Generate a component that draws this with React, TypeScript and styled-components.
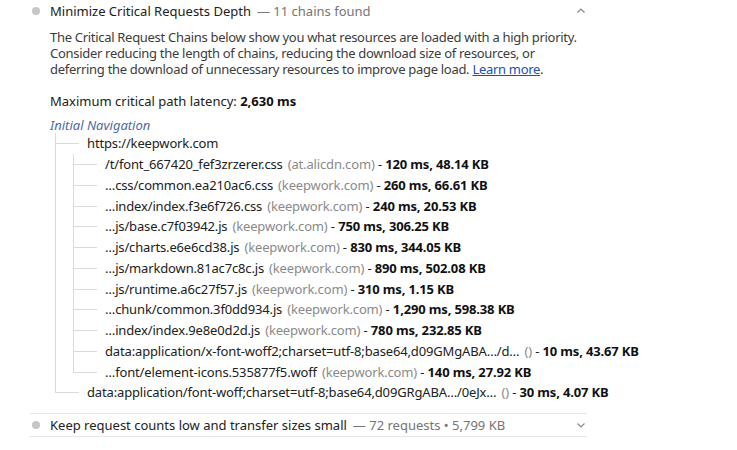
import React from "react";
import styled, { createGlobalStyle } from "styled-components";

const Global = createGlobalStyle`
  html, body { margin: 0; padding: 0; background: #fff; }
  body { font-family: "Noto Sans", "Open Sans", sans-serif; color: #212121; }
`;

const Page = styled.div`
  padding-left: 30px;
  width: 557px;
`;

const Audit = styled.section<{ $bordered?: boolean }>`
  border-top: ${(p) => (p.$bordered ? "1px solid #e6e6e6" : "none")};
  border-bottom: ${(p) => (p.$bordered ? "1px solid #e6e6e6" : "none")};
`;

const Header = styled.div`
  display: flex;
  align-items: center;
  height: 22px;
  padding-left: 2px;
  font-size: 13px;
`;

const Bullet = styled.span`
  width: 8px;
  height: 8px;
  border-radius: 50%;
  background: #c6c6c6;
  margin-right: 10px;
  flex: none;
`;

const Title = styled.span`
  flex: 1;
  white-space: nowrap;
`;

const Display = styled.span`
  color: #757575;
  margin-left: 6px;
`;

const Chevron = styled.svg`
  width: 10px;
  height: 10px;
  margin-right: 1px;
  flex: none;
`;

const Body = styled.div`
  padding-left: 20px;
  padding-top: 7px;
  padding-bottom: 10px;
  font-size: 13px;
`;

const Description = styled.p`
  margin: 0;
  color: #3c3c3c;
  white-space: nowrap;
  letter-spacing: -0.3px;
`;

const DescLine = styled.span`
  display: block;
  height: 16px;
  line-height: 16px;
`;

const Link = styled.a`
  color: #1a4fb5;
  text-decoration: underline;
`;

const Latency = styled.div`
  margin-top: 16px;
  line-height: 16px;
`;

const Strong = styled.b`
  font-weight: 700;
  color: #111;
`;

const NavLabel = styled.div`
  margin-top: 8px;
  line-height: 16px;
  font-style: italic;
  color: #4a6ca4;
`;

const Tree = styled.div`
  letter-spacing: -0.15px;
`;

const Row = styled.div`
  display: flex;
  align-items: stretch;
  height: 20.75px;
  white-space: nowrap;
`;

const Vert = styled.span<{ $on: boolean }>`
  width: 18px;
  flex: none;
  position: relative;
  &::before {
    content: "";
    display: ${(p) => (p.$on ? "block" : "none")};
    position: absolute;
    left: 5px;
    top: 0;
    bottom: 0;
    border-left: 1px solid #dadada;
  }
`;

const Connector = styled.span<{ $last: boolean }>`
  width: 32px;
  flex: none;
  position: relative;
  &::before {
    content: "";
    position: absolute;
    left: 5px;
    top: 0;
    height: ${(p) => (p.$last ? "50%" : "100%")};
    border-left: 1px solid #dadada;
  }
  &::after {
    content: "";
    position: absolute;
    left: 5px;
    width: 24px;
    top: 50%;
    border-top: 1px solid #dadada;
  }
`;

const Label = styled.span`
  display: flex;
  align-items: center;
  padding-left: 5px;
  color: #212121;
`;

const Domain = styled.span`
  color: #8a8a8a;
  margin-left: 5px;
`;

type Node = {
  url: string;
  domain?: string;
  time?: string;
  last: boolean;
  parentsOn: boolean[];
};

const children: [string, string, string][] = [
  ["/t/font_667420_fef3zrzerer.css", "(at.alicdn.com)", "120 ms, 48.14 KB"],
  ["…css/common.ea210ac6.css", "(keepwork.com)", "260 ms, 66.61 KB"],
  ["…index/index.f3e6f726.css", "(keepwork.com)", "240 ms, 20.53 KB"],
  ["…js/base.c7f03942.js", "(keepwork.com)", "750 ms, 306.25 KB"],
  ["…js/charts.e6e6cd38.js", "(keepwork.com)", "830 ms, 344.05 KB"],
  ["…js/markdown.81ac7c8c.js", "(keepwork.com)", "890 ms, 502.08 KB"],
  ["…js/runtime.a6c27f57.js", "(keepwork.com)", "310 ms, 1.15 KB"],
  ["…chunk/common.3f0dd934.js", "(keepwork.com)", "1,290 ms, 598.38 KB"],
  ["…index/index.9e8e0d2d.js", "(keepwork.com)", "780 ms, 232.85 KB"],
  ["data:application/x-font-woff2;charset=utf-8;base64,d09GMgABA…/d…", "()", "10 ms, 43.67 KB"],
  ["…font/element-icons.535877f5.woff", "(keepwork.com)", "140 ms, 27.92 KB"],
];

const nodes: Node[] = [
  { url: "https://keepwork.com", last: false, parentsOn: [] },
  ...children.map(([url, domain, time], i) => ({
    url,
    domain,
    time,
    last: i === children.length - 1,
    parentsOn: [true],
  })),
  {
    url: "data:application/font-woff;charset=utf-8;base64,d09GRgABA…/0eJx…",
    domain: "()",
    time: "30 ms, 4.07 KB",
    last: true,
    parentsOn: [],
  },
];

const Up = () => (
  <Chevron viewBox="0 0 10 10">
    <path d="M1.5 6.5 L5 3 L8.5 6.5" fill="none" stroke="#8a8a8a" strokeWidth="1.2" />
  </Chevron>
);

const Down = () => (
  <Chevron viewBox="0 0 10 10">
    <path d="M1.5 3.5 L5 7 L8.5 3.5" fill="none" stroke="#8a8a8a" strokeWidth="1.2" />
  </Chevron>
);

export default function App() {
  return (
    <>
      <Global />
      <Page>
        <Audit>
          <Header>
            <Bullet />
            <Title>
              Minimize Critical Requests Depth
              <Display>— 11 chains found</Display>
            </Title>
            <Up />
          </Header>
          <Body>
            <Description>
              <DescLine>
                The Critical Request Chains below show you what resources are loaded with a high priority.
              </DescLine>
              <DescLine>
                Consider reducing the length of chains, reducing the download size of resources, or
              </DescLine>
              <DescLine>
                deferring the download of unnecessary resources to improve page load.{" "}
                <Link href="#">Learn more</Link>.
              </DescLine>
            </Description>
            <Latency>
              Maximum critical path latency: <Strong>2,630 ms</Strong>
            </Latency>
            <NavLabel>Initial Navigation</NavLabel>
            <Tree>
              {nodes.map((n, i) => (
                <Row key={i}>
                  {n.parentsOn.map((on, j) => (
                    <Vert key={j} $on={on} />
                  ))}
                  <Connector $last={n.last} />
                  <Label>
                    {n.url}
                    {n.domain && <Domain>{n.domain}</Domain>}
                    {n.time && (
                      <>
                        &nbsp;-&nbsp;<Strong>{n.time}</Strong>
                      </>
                    )}
                  </Label>
                </Row>
              ))}
            </Tree>
          </Body>
        </Audit>
        <Audit $bordered>
          <Header>
            <Bullet />
            <Title>
              Keep request counts low and transfer sizes small
              <Display>— 72 requests • 5,799 KB</Display>
            </Title>
            <Down />
          </Header>
        </Audit>
      </Page>
    </>
  );
}
